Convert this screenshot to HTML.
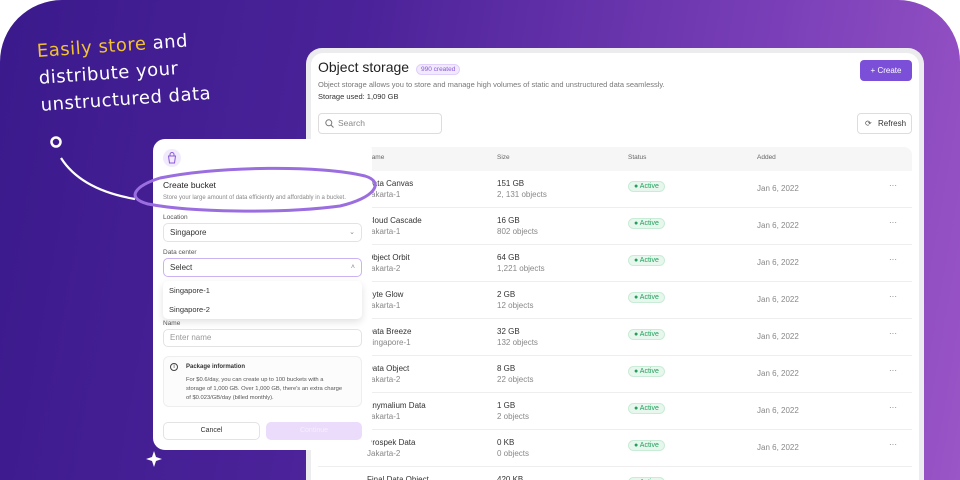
<!DOCTYPE html>
<html style="width:960px;height:480px;overflow:hidden"><head><meta charset="utf-8"><style>
*{box-sizing:border-box;margin:0;padding:0}
html,body{width:960px;height:480px;overflow:hidden}
body{background:#fff;font-family:"Liberation Sans",sans-serif;position:relative}
.bg{position:absolute;left:0;top:0;width:960px;height:480px;border-radius:62px 62px 0 0;background:linear-gradient(100deg,#3a1a8c 0%,#4b2299 35%,#7a3fb8 75%,#9a55c6 100%)}
.hand{position:absolute;left:36px;top:38px;color:#fff;font-family:"DejaVu Sans",sans-serif;font-size:18px;line-height:27px;transform:rotate(-4deg);transform-origin:left top;letter-spacing:0.5px}
.hand span{color:#f2c230}
.frame{position:absolute;left:306px;top:48px;width:618px;height:432px;background:#ececef;border-radius:16px 16px 0 0}
.panel{position:absolute;left:311px;top:53px;width:608px;height:427px;background:#fff;border-radius:12px 12px 0 0;overflow:hidden}
.t{position:absolute;white-space:nowrap}
.modal{position:absolute;left:153px;top:139px;width:219px;height:311px;background:#fff;border-radius:12px}
.sel{position:absolute;left:10px;width:199px;border:1px solid #e3e3e6;border-radius:5px;font-size:8px;color:#333;padding-left:6px}
.lbl{position:absolute;left:10px;font-size:6.5px;color:#555}
.badge{position:absolute;left:317px;font-size:7px;color:#20a05a;background:#e8f7ee;border:1px solid #c9ecd6;border-radius:8px;padding:1px 5px}
</style></head><body>
<div class="bg"></div>
<div class="hand"><span>Easily store</span> and<br>distribute your<br>unstructured data</div>

<div class="frame"></div>
<div class="panel">
 <div class="t" style="left:7px;top:6px;font-size:14px;color:#222">Object storage</div>
 <div class="t" style="left:105px;top:11px;font-size:6.5px;color:#8a5ad8;background:#f1eafd;border:1px solid #e0d0fb;border-radius:7px;padding:1px 4px">990 created</div>
 <div class="t" style="left:7px;top:27px;font-size:7.5px;color:#777">Object storage allows you to store and manage high volumes of static and unstructured data seamlessly.</div>
 <div class="t" style="left:7px;top:39px;font-size:7.5px;color:#333">Storage used: 1,090 GB</div>
 <div class="t" style="left:549px;top:7px;width:52px;height:21px;background:#7b4fd8;border-radius:4px;color:#fff;font-size:8px;line-height:21px;text-align:center">+ Create</div>
 <div class="t" style="left:7px;top:60px;width:124px;height:21px;border:1px solid #ddd;border-radius:4px;font-size:8.5px;color:#888;line-height:19px;padding-left:19px">Search<svg style="position:absolute;left:6px;top:5px" width="9" height="9" viewBox="0 0 9 9"><circle cx="3.8" cy="3.8" r="3" fill="none" stroke="#777" stroke-width="1"/><path d="M6 6l2.5 2.5" stroke="#777"/></svg></div>
 <div class="t" style="left:546px;top:60px;width:55px;height:21px;border:1px solid #ddd;border-radius:4px;font-size:8px;color:#333;line-height:19px;padding-left:20px">Refresh<span style="position:absolute;left:7px;top:0;color:#555">⟳</span></div>
 <div class="t" style="left:7px;top:94px;width:594px;height:24px;background:#f6f6f7;border-radius:8px 8px 0 0"></div>
 <div class="t" style="left:56px;top:101px;font-size:6.5px;color:#666">Name</div>
 <div class="t" style="left:186px;top:101px;font-size:6.5px;color:#666">Size</div>
 <div class="t" style="left:317px;top:101px;font-size:6.5px;color:#666">Status</div>
 <div class="t" style="left:446px;top:101px;font-size:6.5px;color:#666">Added</div>
 <div id="rows"></div>
</div>

<svg style="position:absolute;left:0;top:0" width="960" height="480">
 <circle cx="56" cy="142" r="4.5" fill="none" stroke="#fff" stroke-width="2.5"/>
 <path d="M61 158 C75 180 100 193 135 199" fill="none" stroke="#fff" stroke-width="2.2"/>
 <path d="M152 469 l2 -6 l2 6 l6 2 l-6 2 l-2 6 l-2 -6 l-6 -2z" fill="#fff" transform="translate(0,-12)"/>
</svg>

<div class="modal">
 <div style="position:absolute;left:10px;top:10px;width:18px;height:18px;border-radius:50%;background:#f1eafd"></div>
 <svg style="position:absolute;left:14px;top:13px" width="10" height="12" viewBox="0 0 10 12"><path d="M1.5 4h7l-1 7h-5z M3 4V2.5a2 2 0 0 1 4 0V4" fill="none" stroke="#8a5ad8" stroke-width="1"/></svg>
 <div class="t" style="left:10px;top:41px;font-size:8.5px;color:#222">Create bucket</div>
 <div class="t" style="left:10px;top:56px;font-size:6px;color:#888">Store your large amount of data efficiently and affordably in a bucket.</div>
 <div class="lbl" style="top:75px">Location</div>
 <div class="sel" style="top:84px;height:19px;line-height:17px">Singapore<span style="position:absolute;right:6px;color:#888;font-size:7px">⌄</span></div>
 <div class="lbl" style="top:110px">Data center</div>
 <div class="sel" style="top:119px;height:19px;line-height:17px;border-color:#c9b3f3">Select<span style="position:absolute;right:6px;color:#888;font-size:7px">˄</span></div>
 <div style="position:absolute;left:10px;top:142px;width:199px;height:38px;background:#fff;border-radius:5px;box-shadow:0 3px 8px rgba(0,0,0,.12)">
  <div class="t" style="left:6px;top:5px;font-size:7.5px;color:#333">Singapore-1</div>
  <div class="t" style="left:6px;top:24px;font-size:7.5px;color:#333">Singapore-2</div>
 </div>
 <div class="lbl" style="top:181px">Name</div>
 <div class="sel" style="top:190px;height:18px;line-height:16px;color:#999">Enter name</div>
 <div style="position:absolute;left:10px;top:217px;width:199px;height:51px;border:1px solid #eee;background:#fcfcfc;border-radius:6px">
  <div class="t" style="left:6px;top:6px;width:8px;height:8px;border:1px solid #444;border-radius:50%;font-size:5px;text-align:center;line-height:6px">i</div>
  <div class="t" style="left:22px;top:7px;font-size:6px;color:#333;font-weight:bold">Package information</div>
  <div class="t" style="left:22px;top:19px;font-size:5.8px;color:#555;line-height:9px">For $0.6/day, you can create up to 100 buckets with a<br>storage of 1,000 GB. Over 1,000 GB, there's an extra charge<br>of $0.023/GB/day (billed monthly).</div>
 </div>
 <div class="t" style="left:10px;top:283px;width:97px;height:18px;border:1px solid #e3e3e6;border-radius:5px;font-size:7px;color:#333;text-align:center;line-height:16px">Cancel</div>
 <div class="t" style="left:113px;top:283px;width:96px;height:18px;background:#ebdcfc;border-radius:5px;font-size:7px;color:#f5efff;text-align:center;line-height:18px">Continue</div>
</div>

<svg style="position:absolute;left:0;top:0" width="960" height="480">
 <path d="M160 178 C220 166 320 165 365 176 C385 182 375 198 340 206 C280 214 190 212 148 204 C125 198 135 186 160 178" fill="none" stroke="#9b6ee0" stroke-width="3"/>
</svg>

<script>
var d=[["Data Canvas","Jakarta-1","151 GB","2, 131 objects"],["Cloud Cascade","Jakarta-1","16 GB","802 objects"],["Object Orbit","Jakarta-2","64 GB","1,221 objects"],["Byte Glow","Jakarta-1","2 GB","12 objects"],["Data Breeze","Singapore-1","32 GB","132 objects"],["Data Object","Jakarta-2","8 GB","22 objects"],["Anymalium Data","Jakarta-1","1 GB","2 objects"],["Prospek Data","Jakarta-2","0 KB","0 objects"],["Final Data Object","Jakarta-1","420 KB","3 objects"]];
var h="";d.forEach(function(r,i){var y=118+i*37;
h+='<div class="t" style="left:7px;top:'+y+'px;width:594px;height:37px;border-bottom:1px solid #eee"></div>';
h+='<div class="t" style="left:56px;top:'+(y+8)+'px;font-size:8px;color:#333">'+r[0]+'</div><div class="t" style="left:56px;top:'+(y+19)+'px;font-size:8px;color:#888">'+r[1]+'</div>';
h+='<div class="t" style="left:186px;top:'+(y+8)+'px;font-size:8px;color:#333">'+r[2]+'</div><div class="t" style="left:186px;top:'+(y+19)+'px;font-size:8px;color:#888">'+r[3]+'</div>';
h+='<div class="badge" style="top:'+(y+10)+'px">● Active</div>';
h+='<div class="t" style="left:446px;top:'+(y+13)+'px;font-size:8px;color:#888">Jan 6, 2022</div><div class="t" style="left:578px;top:'+(y+10)+'px;font-size:8px;color:#777">···</div>';});
document.getElementById("rows").innerHTML=h;
</script>
</body></html>
